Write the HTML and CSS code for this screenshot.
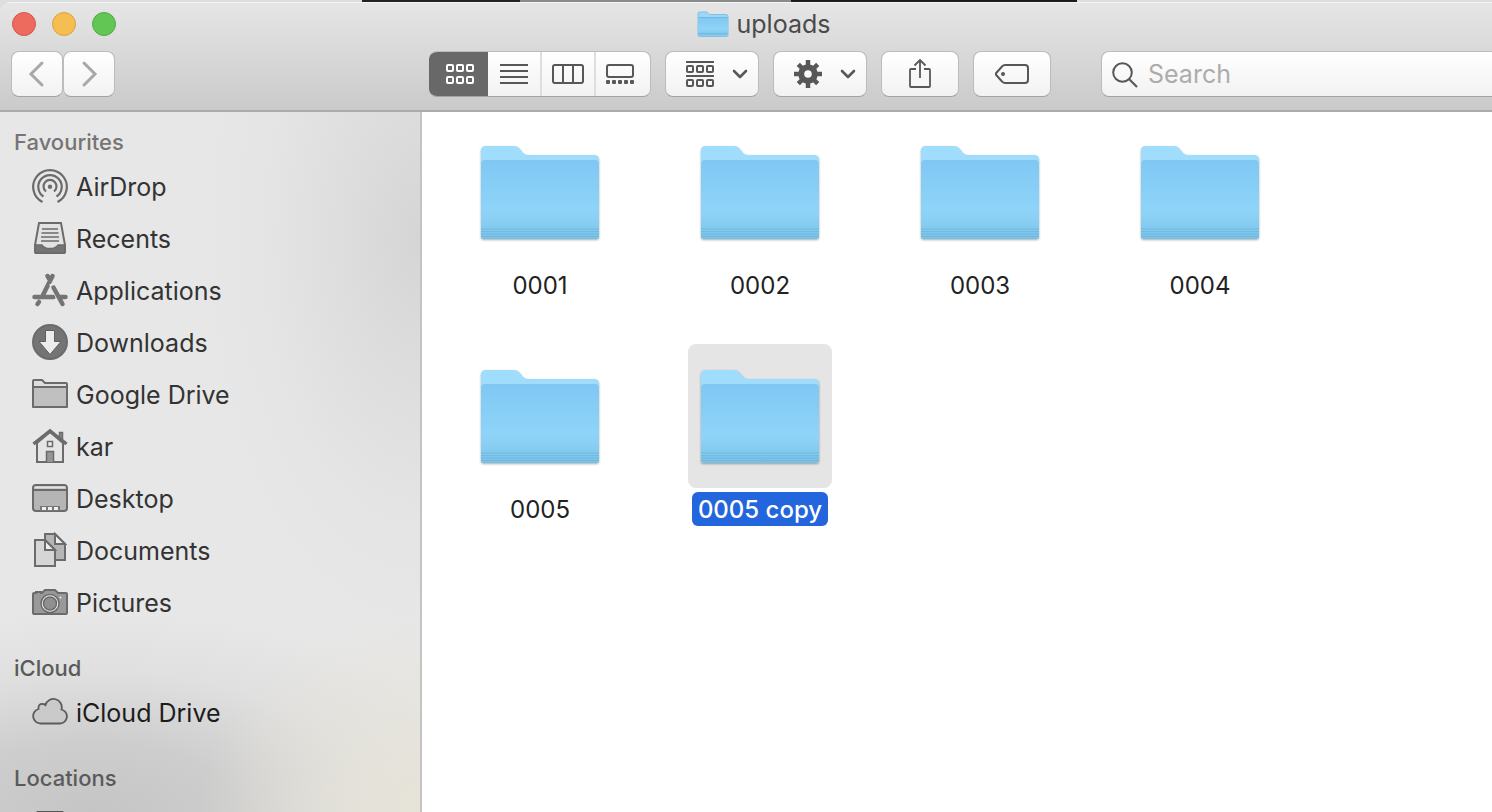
FILE: index.html
```html
<!DOCTYPE html>
<html lang="en">
<head>
<meta charset="utf-8">
<meta name="viewport" content="width=device-width, initial-scale=1">
<title>uploads</title>
<link rel="stylesheet" href="styles.css">
</head>
<body>
<svg class="defs" width="0" height="0" aria-hidden="true">
  <defs>
    <linearGradient id="front" x1="0" y1="0" x2="0" y2="1">
      <stop offset="0" stop-color="#7fc8f4"/>
      <stop offset=".65" stop-color="#8fd4f8"/>
      <stop offset=".85" stop-color="#83cbee"/>
      <stop offset="1" stop-color="#78c0e6"/>
    </linearGradient>
    <symbol id="folder" viewBox="0 0 120 96">
      <path d="M1 7Q1 2 6 2H34Q37 2 39 4L43 9Q45 11 48 11H114Q119 11 119 16V92Q119 95 116 95H4Q1 95 1 92Z" fill="#a0dcfc"/>
      <path d="M1 20Q1 16 5 16H115Q119 16 119 20V92Q119 95 116 95H4Q1 95 1 92Z" fill="url(#front)"/>
      <path d="M1 85H119M1 87.500H119M1 90H119M1 92.500H119" stroke="#68b3da" stroke-width="1" opacity=".6"/>
    </symbol>
  </defs>
</svg>
<div class="backdrop"></div>
<div class="window">
  <header class="chrome">
    <div class="titlebar">
      <div class="lights">
        <button class="light close" aria-label="Close"></button>
        <button class="light minimise" aria-label="Minimise"></button>
        <button class="light zoom" aria-label="Zoom"></button>
      </div>
      <h1 class="title"><svg class="title-icon" viewBox="0 0 32 28" aria-hidden="true"><path d="M1 3.500Q1 2 2.500 2H9Q10 2 11 3L12.500 4.500H29Q31 4.500 31 6.500V25Q31 26.500 29.500 26.500H2.500Q1 26.500 1 25Z" fill="#9bd7f8" stroke="#83c0e2"/><path d="M1.500 7.500H30.500V25.500H1.500Z" fill="url(#front)" stroke="none"/><path d="M1.500 7.500H30.500M1.500 23.500H30.500" stroke="#74b9e0"/></svg>uploads</h1>
    </div>
    <div class="toolbar">
      <nav class="history" aria-label="History">
        <button class="btn step" aria-label="Back"><svg width="24" height="32" viewBox="0 0 24 32"><path d="M17 5 6 16l11 11"/></svg></button>
        <button class="btn step" aria-label="Forward"><svg width="24" height="32" viewBox="0 0 24 32"><path d="M7 5 18 16 7 27"/></svg></button>
      </nav>
      <div class="tools">
        <div class="views" role="group" aria-label="View">
          <button class="view active" aria-label="Icons" aria-pressed="true"><svg width="28" height="22" viewBox="0 0 28 22"><g stroke-width="2"><rect x="1" y="2" width="6" height="6" rx="1"/><rect x="11" y="2" width="6" height="6" rx="1"/><rect x="21" y="2" width="6" height="6" rx="1"/><rect x="1" y="14" width="6" height="6" rx="1"/><rect x="11" y="14" width="6" height="6" rx="1"/><rect x="21" y="14" width="6" height="6" rx="1"/></g></svg></button>
          <button class="view" aria-label="List" aria-pressed="false"><svg width="28" height="22" viewBox="0 0 28 22"><path d="M0 2H28M0 8H28M0 14H28M0 20H28" stroke-width="2"/></svg></button>
          <button class="view" aria-label="Columns" aria-pressed="false"><svg width="32" height="22" viewBox="0 0 32 22"><rect x="1" y="2" width="30" height="18" rx="2" stroke-width="2"/><path d="M11 2V20M21 2V20" stroke-width="2"/></svg></button>
          <button class="view" aria-label="Gallery" aria-pressed="false"><svg width="28" height="22" viewBox="0 0 28 22"><rect x="1" y="2" width="26" height="12" rx="2" stroke-width="2"/><g fill="#575757" stroke="none"><rect x="0" y="17" width="4" height="4" rx="1"/><rect x="6" y="17" width="4" height="4" rx="1"/><rect x="12" y="17" width="4" height="4" rx="1"/><rect x="18" y="17" width="4" height="4" rx="1"/><rect x="24" y="17" width="4" height="4" rx="1"/></g></svg></button>
        </div>
        <button class="btn menu" aria-label="Arrange" aria-haspopup="true"><svg width="28" height="28" viewBox="0 0 28 28"><g stroke-width="2"><path d="M0 2H28M0 16H28"/><rect x="1" y="6" width="6" height="6" rx="1"/><rect x="11" y="6" width="6" height="6" rx="1"/><rect x="21" y="6" width="6" height="6" rx="1"/><rect x="1" y="20" width="6" height="6" rx="1"/><rect x="11" y="20" width="6" height="6" rx="1"/><rect x="21" y="20" width="6" height="6" rx="1"/></g></svg><svg width="16" height="12" viewBox="0 0 16 12"><path d="M2 3 8 9l6-6" stroke-width="2.600" stroke-linecap="round" stroke-linejoin="round"/></svg></button>
        <button class="btn menu" aria-label="Action" aria-haspopup="true"><svg width="28" height="28" viewBox="0 0 28 28"><circle cx="14" cy="14" r="6.800" stroke-width="6"/><path d="M14 0V5M14 23V28M0 14H5M23 14H28M4.300 4.300 8 8M20 20 23.700 23.700M4.300 23.700 8 20M20 8 23.700 4.300" stroke-width="4.500"/></svg><svg width="16" height="12" viewBox="0 0 16 12"><path d="M2 3 8 9l6-6" stroke-width="2.600" stroke-linecap="round" stroke-linejoin="round"/></svg></button>
        <button class="btn wide" aria-label="Share"><svg width="24" height="32" viewBox="0 0 24 32"><path d="M8 11H3Q2 11 2 12V28Q2 29 3 29H21Q22 29 22 28V12Q22 11 21 11H16M12 20V2M6.500 7.500 12 2l5.500 5.500" stroke-width="1.800"/></svg></button>
        <button class="btn wide" aria-label="Tags"><svg width="34" height="22" viewBox="0 0 34 22"><path d="M10 2H30Q33 2 33 5V17Q33 20 30 20H10Q8.500 20 7 18.500L1.200 12Q.3 11 1.200 10L7 3.500Q8.500 2 10 2Z" stroke-width="2"/><circle cx="8" cy="11" r="2" fill="#575757" stroke="none"/></svg></button>
      </div>
      <label class="search"><svg width="26" height="26" viewBox="0 0 26 26" aria-hidden="true"><circle cx="10.500" cy="11.500" r="9.300" stroke-width="2"/><path d="M17 18 25 26" stroke-width="2.200"/></svg><input type="search" placeholder="Search" aria-label="Search"></label>
    </div>
  </header>
  <div class="content">
    <aside class="sidebar">
      <section class="group">
        <h2 class="heading">Favourites</h2>
        <a class="place" href="#airdrop"><svg viewBox="0 0 36 36"><g stroke-width="2.200"><path d="M10.500 34A16.800 16.800 0 1 1 25.500 34"/><path d="M11.500 28.500A11.700 11.700 0 1 1 24.500 28.500"/><path d="M14 23.500A6.500 6.500 0 1 1 22 23.500"/></g><circle cx="18" cy="18.800" r="2.200" fill="#6e6e6e" stroke="none"/></svg>AirDrop</a>
        <a class="place" href="#recents"><svg viewBox="0 0 36 36"><path d="M7 3H29L33 25V32Q33 33 32 33H4Q3 33 3 32V25Z" fill="#e2e2e2" stroke-width="2"/><path d="M3 25H10Q12 28.500 18 28.500T26 25H33V32Q33 33 32 33H4Q3 33 3 32Z" fill="#747474" stroke-width="1.500"/><path d="M10 9H26M9.500 13H26.500M9 17H27M9 21H27" stroke-width="1.600"/></svg>Recents</a>
        <a class="place" href="#applications"><svg viewBox="0 0 36 36"><g stroke-linecap="round" stroke="#747474" stroke-width="4.500"><path d="M2.500 25H21.500M28.500 25H33.500M5.500 32 7 30M15.500 4 17 6.500M20.500 4 10.500 24"/><path d="M18.500 12 27 29" stroke="#e7e7e7" stroke-width="3" stroke-linecap="butt"/><path d="M21.500 15.500 30.500 32"/></g></svg>Applications</a>
        <a class="place" href="#downloads"><svg viewBox="0 0 36 36"><circle cx="18" cy="18" r="17" fill="#747474" stroke-width="2"/><path d="M13.500 6.500H22.500V17.500H29L18 30.500 7 17.500H13.500Z" fill="#ececec" stroke="#606060" stroke-width="1"/></svg>Downloads</a>
        <a class="place" href="#google-drive"><svg viewBox="0 0 36 36"><path d="M1 31V5Q1 4 2 4H10L13 7H34Q35 7 35 8V31Z" fill="#dedede" stroke-width="2" stroke-linejoin="round"/><path d="M2 11.500H34V30H2Z" fill="#c0c0c0" stroke="none"/><path d="M1 11H35" stroke-width="2"/></svg>Google Drive</a>
        <a class="place" href="#kar"><svg viewBox="0 0 36 36"><path d="M27.500 10V4.500H30.500V13" fill="#888" stroke-width="1.500"/><path d="M5 15V34H31V15L18 4Z" fill="#e5e5e5" stroke-width="2"/><path d="M1.500 16 18 3 34.500 16" stroke-width="3.500"/><rect x="15.500" y="13.500" width="5" height="5" fill="#ececec" stroke-width="1.500"/><path d="M14.500 34V23.500H21.500V34" fill="#959595" stroke-width="1.500"/></svg>kar</a>
        <a class="place" href="#desktop"><svg viewBox="0 0 36 36"><rect x="1" y="5" width="34" height="26" rx="3" fill="#b5b5b5" stroke-width="2"/><path d="M2.500 7.500H33.500" stroke="#e2e2e2" stroke-width="2"/><path d="M2 10H34" stroke-width="2"/><path d="M8 26H28V31H8Z" fill="#777" stroke="none"/><path d="M10 27H14V30H10ZM16 27H20V30H16ZM22 27H26V30H22Z" fill="#efefef" stroke="none"/></svg>Desktop</a>
        <a class="place" href="#documents"><svg viewBox="0 0 36 36"><path d="M13 2H23L33 12V28H13Z" fill="#b5b5b5" stroke-width="2"/><path d="M23 2V12H33Z" fill="#eee" stroke-width="2"/><path d="M3 8H13L23 18V34H3Z" fill="#d6d6d6" stroke-width="2"/><path d="M13 8V18H23Z" fill="#eee" stroke-width="2"/></svg>Documents</a>
        <a class="place" href="#pictures"><svg viewBox="0 0 36 36"><path d="M2 9H4V8H9V9H10L13 6H23L26 9H34Q35 9 35 10V29Q35 30 34 30H2Q1 30 1 29V10Q1 9 2 9Z" fill="#999" stroke-width="2"/><circle cx="18" cy="19.500" r="9" fill="#eee" stroke-width="1.500"/><circle cx="18" cy="19.500" r="6.500" fill="#909090" stroke-width="1.500"/><circle cx="28.500" cy="13.500" r="1" fill="#eee" stroke="none"/></svg>Pictures</a>
      </section>
      <section class="group">
        <h2 class="heading dim">iCloud</h2>
        <a class="place strong" href="#icloud-drive"><svg viewBox="0 0 36 36"><path d="M8.500 29.500A7.400 7.400 0 0 1 6.500 15Q6 9.500 11 10Q12.500 10 13.500 11A8.300 8.300 0 0 1 29.500 15.500A7.100 7.100 0 0 1 28 29.500Z" fill="#cacaca" stroke="#5c5c5c" stroke-width="1.800"/></svg>iCloud Drive</a>
      </section>
      <section class="group">
        <h2 class="heading dim">Locations</h2>
        <a class="place" href="#computer" aria-label="Computer"><svg viewBox="0 0 36 36"><rect x="5" y="8" width="26" height="19" rx="1" fill="#b5b5b5" stroke="#555" stroke-width="2"/><path d="M1 30H35" stroke-width="3"/></svg></a>
      </section>
    </aside>
    <main class="files">
      <button class="file"><span class="tile"><svg class="folder" aria-hidden="true"><use href="#folder"/></svg></span><span class="name">0001</span></button>
      <button class="file"><span class="tile"><svg class="folder" aria-hidden="true"><use href="#folder"/></svg></span><span class="name">0002</span></button>
      <button class="file"><span class="tile"><svg class="folder" aria-hidden="true"><use href="#folder"/></svg></span><span class="name">0003</span></button>
      <button class="file"><span class="tile"><svg class="folder" aria-hidden="true"><use href="#folder"/></svg></span><span class="name">0004</span></button>
      <button class="file"><span class="tile"><svg class="folder" aria-hidden="true"><use href="#folder"/></svg></span><span class="name">0005</span></button>
      <button class="file selected" aria-pressed="true"><span class="tile"><svg class="folder" aria-hidden="true"><use href="#folder"/></svg></span><span class="name">0005 copy</span></button>
    </main>
  </div>
</div>
</body>
</html>
```
FILE: styles.css
```css
* { box-sizing: border-box; }

body {
  margin: 0;
  height: 100vh;
  overflow: hidden;
  display: flex;
  flex-direction: column;
  background: #dedede;
  font-family: Inter, Roboto, "Liberation Sans", sans-serif;
  color: #333;
}

button {
  padding: 0;
  border: 0;
  background: none;
  font: inherit;
  color: inherit;
}

svg { display: block; fill: none; stroke: #575757; flex: none; }
.defs { position: absolute; }

/* Sliver of whatever is behind the window */
.backdrop {
  height: 2px;
  flex: none;
  margin: 0 415px 0 362px;
  background: linear-gradient(90deg, #222 158px, #8b8b8b 158px 429px, #1c1c1c 429px);
}

.window {
  flex: 1;
  min-height: 0;
  display: flex;
  flex-direction: column;
  border-top-left-radius: 10px;
  overflow: hidden;
}

.chrome {
  flex: none;
  background: linear-gradient(#e6e6e6, #cacaca);
  border-bottom: 2px solid #aaa;
  box-shadow: inset 0 1px #f4f4f4;
  padding-bottom: 13px;
}

.titlebar {
  display: grid;
  grid-template-columns: 1fr auto 1fr;
  align-items: center;
  height: 49px;
  padding: 0 0 5px 12px;
}

.lights { display: flex; gap: 16px; }
.light { width: 24px; height: 24px; border-radius: 50%; border: 1px solid; }
.close { background: #ed6a5f; border-color: #d8534a; }
.minimise { background: #f6be50; border-color: #dba03c; }
.zoom { background: #62c655; border-color: #4fa940; }

.title {
  display: flex;
  align-items: center;
  gap: 8px;
  margin: 0;
  padding-left: 23px;
  font-size: 25px;
  line-height: 32px;
  font-weight: 400;
  color: #4a4a4a;
}
.title-icon { width: 32px; height: 28px; }

.toolbar { display: flex; height: 46px; padding-left: 11px; }
.history { display: flex; flex: 0 0 418px; }
.tools { display: flex; gap: 14px; margin-right: 50px; }

.btn, .views, .search {
  border: 1px solid #bcbcbc;
  border-bottom-color: #a2a2a2;
  border-radius: 8px;
  background: linear-gradient(#fff, #f2f2f2);
}
.btn { display: flex; align-items: center; justify-content: center; }
.step { width: 52px; }
.step svg { stroke: #a8a8a8; stroke-width: 3; stroke-linecap: round; }
.menu { width: 94px; justify-content: space-between; padding: 0 10px 0 20px; }
.wide { width: 78px; }

.views { display: flex; width: 222px; overflow: hidden; border-left: 0; }
.view {
  flex: 0 0 54px;
  display: flex;
  align-items: center;
  justify-content: center;
  border-right: 2px solid #dedede;
}
.view:last-child { border-right: 0; padding-right: 6px; }
.view.active { flex: 0 0 59px; background: #686868; border: 0; padding-left: 3px; }
.active svg { stroke: #fff; }

.search {
  flex: 1;
  min-width: 0;
  display: flex;
  align-items: center;
  gap: 10px;
  padding-left: 10px;
  border-right: 0;
  border-radius: 8px 0 0 8px;
}
.search svg { overflow: visible; }
.search input {
  flex: 1;
  min-width: 0;
  padding: 0;
  border: 0;
  outline: 0;
  background: none;
  font: 400 25px/32px Inter, Roboto, sans-serif;
}
.search input::placeholder { color: #acacac; opacity: 1; }

.content { flex: 1; min-height: 0; display: flex; }

.sidebar {
  flex: 0 0 422px;
  overflow: hidden;
  padding-top: 11px;
  border-right: 2px solid #c3c3c3;
  background:
    radial-gradient(ellipse 220px 200px at 100% 100%, #e6e3d8, #e6e3d8b0 35%, #e6e3d800),
    radial-gradient(ellipse 420px 200px at 22% 100%, #c5c5c5, #c8c8c8d0 35%, #d4d4d460 70%, #e7e7e700),
    radial-gradient(ellipse 220px 400px at 100% 18%, #d5d5d5, #d9d9d9b0 35%, #e0e0e060 70%, #e7e7e700),
    #e7e7e7;
}

.group { display: flex; flex-direction: column; margin-bottom: 20px; }
.heading {
  margin: 0;
  padding-left: 14px;
  font-size: 22px;
  line-height: 38px;
  font-weight: 500;
  color: #757575;
}
.heading.dim { color: #5a5a5a; }

.place {
  display: flex;
  align-items: center;
  gap: 8px;
  height: 52px;
  padding-left: 32px;
  font-size: 25px;
  line-height: 32px;
  color: #333;
  text-decoration: none;
}
.place.strong { color: #1c1c1c; }
.place svg { width: 36px; height: 36px; margin-bottom: 2px; stroke: #6b6b6b; }

.files {
  flex: 1;
  display: grid;
  grid-template-columns: repeat(auto-fill, 220px);
  grid-auto-rows: 182px;
  gap: 42px 0;
  padding: 8px 0 0 8px;
  background: #fff;
}

.file { display: flex; flex-direction: column; align-items: center; gap: 4px; color: #222; }
.tile {
  display: flex;
  align-items: center;
  justify-content: center;
  width: 144px;
  height: 144px;
  border-radius: 8px;
}
.folder { width: 120px; height: 96px; stroke: none; overflow: visible; filter: drop-shadow(0 1px 1px #0005); }
.name { height: 34px; padding: 1px 6px 0; border-radius: 6px; font-size: 24px; line-height: 34px; }
.selected .tile { background: #e5e5e5; }
.selected .name { background: #2265dc; color: #fff; font-weight: 500; }
```
